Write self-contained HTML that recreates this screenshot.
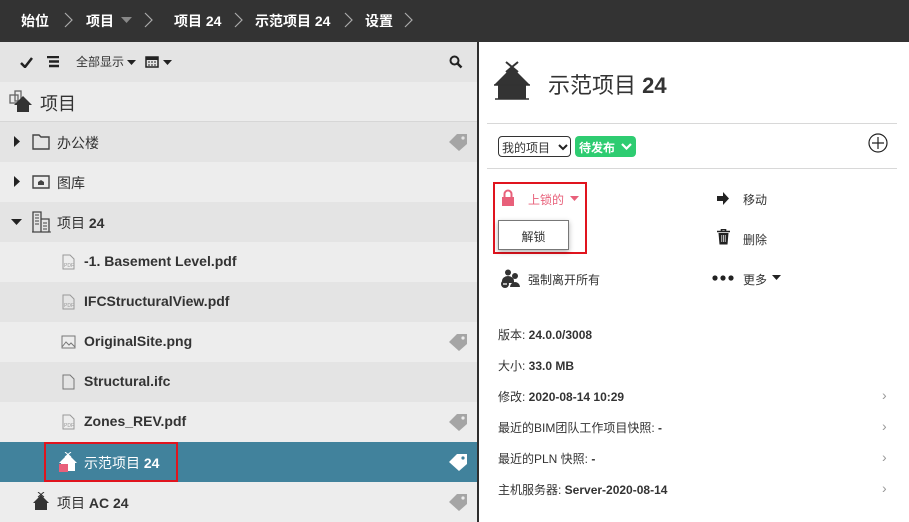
<!DOCTYPE html>
<html><head><meta charset="utf-8"><style>
*{margin:0;padding:0;box-sizing:border-box}
body{width:909px;height:522px;overflow:hidden;font-family:"Liberation Sans","Noto Sans CJK SC",sans-serif;background:#fff;position:relative;color:#333}
.top{position:absolute;left:0;top:0;width:909px;height:42px;background:#333;color:#fff;font-size:14px;font-weight:bold}
.top span{position:absolute;top:11px}
.top svg.sep{position:absolute;top:12px}
.left{position:absolute;left:0;top:42px;width:477px;height:480px;background:#ececec}
.vline{position:absolute;left:477px;top:42px;width:2px;height:480px;background:#2e2e2e}
.tool{position:absolute;left:0;top:0;width:477px;height:40px;background:#e4e4e4;font-size:13px}
.hdr{position:absolute;left:0;top:40px;width:477px;height:40px;background:#ececec;border-bottom:1px solid #d6d6d6;font-size:18px}
.row{position:absolute;left:0;width:477px;height:40px;font-size:14px}
.row .t{position:absolute;top:11px}
.d{background:#e4e4e4}.l{background:#ededed}
.b{font-weight:bold}
.tag{position:absolute;right:10px;top:12px}
.right{position:absolute;left:479px;top:42px;width:430px;height:480px;font-size:13px}
.info{position:absolute;left:19px;font-size:12px}
.chev{position:absolute;left:403px;color:#999;font-size:14px}
</style></head><body>
<div class="top">
<span style="left:21px">始位</span><svg class="sep" style="left:64px" width="9" height="16"><path d="M1 1l7 7-7 7" stroke="#aaa" stroke-width="1.2" fill="none"/></svg>
<span style="left:86px">项目</span><svg style="position:absolute;left:121px;top:17px" width="12" height="7"><path d="M0 0h11L5.5 6z" fill="#888"/></svg><svg class="sep" style="left:144px" width="9" height="16"><path d="M1 1l7 7-7 7" stroke="#aaa" stroke-width="1.2" fill="none"/></svg>
<span style="left:174px">项目 24</span><svg class="sep" style="left:234px" width="9" height="16"><path d="M1 1l7 7-7 7" stroke="#aaa" stroke-width="1.2" fill="none"/></svg>
<span style="left:255px">示范项目 24</span><svg class="sep" style="left:344px" width="9" height="16"><path d="M1 1l7 7-7 7" stroke="#aaa" stroke-width="1.2" fill="none"/></svg>
<span style="left:365px">设置</span><svg class="sep" style="left:404px" width="9" height="16"><path d="M1 1l7 7-7 7" stroke="#aaa" stroke-width="1.2" fill="none"/></svg>
</div>
<div class="left">
<div class="tool">
<svg style="position:absolute;left:20px;top:15px" width="13" height="11"><path d="M1 6l4 4 7-9" stroke="#222" stroke-width="2.5" fill="none"/></svg>
<svg style="position:absolute;left:47px;top:14px" width="14" height="12"><path d="M0 1h12M2 5.5h10M2 10h10" stroke="#222" stroke-width="2.5"/></svg>
<span style="position:absolute;left:76px;top:11px;font-size:12px">全部显示</span>
<svg style="position:absolute;left:127px;top:18px" width="10" height="6"><path d="M0 0h9L4.5 5z" fill="#222"/></svg>
<svg style="position:absolute;left:145px;top:13px" width="14" height="13"><rect x="1" y="2" width="12" height="10" fill="none" stroke="#222" stroke-width="1.5"/><rect x="1" y="2" width="12" height="3" fill="#222"/><path d="M3 7h2M6 7h2M9 7h2M3 10h2M6 10h2M9 10h2" stroke="#222"/></svg>
<svg style="position:absolute;left:163px;top:18px" width="10" height="6"><path d="M0 0h9L4.5 5z" fill="#222"/></svg>
<svg style="position:absolute;left:449px;top:13px" width="14" height="14"><circle cx="5.5" cy="5.5" r="4" stroke="#222" stroke-width="2" fill="none"/><path d="M8.5 8.5l4 4" stroke="#222" stroke-width="2.5"/></svg>
</div>
<div class="hdr">
<svg style="position:absolute;left:9px;top:7px" width="24" height="26"><rect x="6" y="2" width="6" height="10" fill="none" stroke="#666" stroke-width="1.3"/><rect x="1" y="6" width="8" height="8" fill="none" stroke="#666" stroke-width="1.3"/><path d="M14 7l9 9h-3v7h-12v-7h-3z" fill="#333"/></svg>
<span style="position:absolute;left:40px;top:8px">项目</span>
</div>
<div class="row d" style="top:80px">
<svg style="position:absolute;left:14px;top:14px" width="6" height="11"><path d="M0 0l6 5.5L0 11z" fill="#222"/></svg>
<svg style="position:absolute;left:32px;top:12px" width="18" height="16"><path d="M1 1h6l2 2h8v12H1z" fill="none" stroke="#444" stroke-width="1.4"/></svg>
<span class="t" style="left:57px">办公楼</span>
<svg class="tag" width="19" height="17"><path d="M9 0h10v10l-8 7-10-9z" fill="#a5a5a5"/><circle cx="15" cy="4" r="1.6" fill="#e4e4e4"/></svg>
</div>
<div class="row l" style="top:120px">
<svg style="position:absolute;left:14px;top:14px" width="6" height="11"><path d="M0 0l6 5.5L0 11z" fill="#222"/></svg>
<svg style="position:absolute;left:32px;top:12px" width="18" height="16"><path d="M1 2h16v12H1z" fill="none" stroke="#444" stroke-width="1.4"/><path d="M6 11h6v-3l-3-2-3 2z" fill="#444"/></svg>
<span class="t" style="left:57px">图库</span>
</div>
<div class="row d" style="top:160px">
<svg style="position:absolute;left:11px;top:17px" width="11" height="6"><path d="M0 0h11L5.5 6z" fill="#222"/></svg>
<svg style="position:absolute;left:32px;top:9px" width="19" height="22"><path d="M1 1h8v20H1zM9 8h8v13H9" fill="none" stroke="#444" stroke-width="1.3"/><path d="M3 4h4M3 7h4M3 10h4M3 13h4M11 12h4M11 15h4M11 18h4M0 21h19" stroke="#444"/></svg>
<span class="t" style="left:57px">项目 <b>24</b></span>
</div>
<div class="row l" style="top:200px">
<svg style="position:absolute;left:62px;top:12px" width="13" height="16"><path d="M1 1h7l4 4v10H1z" fill="none" stroke="#999"/><text x="2" y="13" font-size="5" fill="#999" font-family="Liberation Sans">PDF</text></svg>
<span class="t b" style="left:84px">-1. Basement Level.pdf</span>
</div>
<div class="row d" style="top:240px">
<svg style="position:absolute;left:62px;top:12px" width="13" height="16"><path d="M1 1h7l4 4v10H1z" fill="none" stroke="#999"/><text x="2" y="13" font-size="5" fill="#999" font-family="Liberation Sans">PDF</text></svg>
<span class="t b" style="left:84px">IFCStructuralView.pdf</span>
</div>
<div class="row l" style="top:280px">
<svg style="position:absolute;left:61px;top:13px" width="15" height="14"><rect x="1" y="1" width="13" height="12" fill="none" stroke="#777"/><path d="M1 12l4-5 3 3 2-2 4 4" fill="none" stroke="#777"/></svg>
<span class="t b" style="left:84px">OriginalSite.png</span>
<svg class="tag" width="19" height="17"><path d="M9 0h10v10l-8 7-10-9z" fill="#a5a5a5"/><circle cx="15" cy="4" r="1.6" fill="#ededed"/></svg>
</div>
<div class="row d" style="top:320px">
<svg style="position:absolute;left:62px;top:12px" width="13" height="16"><path d="M1 1h7l4 4v10H1z" fill="none" stroke="#777"/></svg>
<span class="t b" style="left:84px">Structural.ifc</span>
</div>
<div class="row l" style="top:360px">
<svg style="position:absolute;left:62px;top:12px" width="13" height="16"><path d="M1 1h7l4 4v10H1z" fill="none" stroke="#999"/><text x="2" y="13" font-size="5" fill="#999" font-family="Liberation Sans">PDF</text></svg>
<span class="t b" style="left:84px">Zones_REV.pdf</span>
<svg class="tag" width="19" height="17"><path d="M9 0h10v10l-8 7-10-9z" fill="#a5a5a5"/><circle cx="15" cy="4" r="1.6" fill="#ededed"/></svg>
</div>
<div class="row" style="top:400px;background:#41829c;color:#fff">
<div style="position:absolute;left:44px;top:0;width:134px;height:40px;border:2px solid #e0141e"></div>
<svg style="position:absolute;left:58px;top:10px" width="20" height="20"><path d="M10 2l9 9h-2v8H3v-8H1z" fill="#fff"/><path d="M7 0l6 5M13 0l-6 5" stroke="#fff"/><rect x="1" y="12" width="9" height="8" fill="#e8607a"/></svg>
<span class="t" style="left:84px">示范项目 <b>24</b></span>
<svg class="tag" width="19" height="17"><path d="M9 0h10v10l-8 7-10-9z" fill="#fff"/><circle cx="15" cy="4" r="1.6" fill="#41829c"/></svg>
</div>
<div class="row l" style="top:440px">
<svg style="position:absolute;left:32px;top:10px" width="18" height="19"><path d="M9 3l8 8h-2v7H3v-7H1z" fill="#333"/><path d="M6 0l6 5M12 0l-6 5" stroke="#333"/></svg>
<span class="t" style="left:57px">项目 <b>AC 24</b></span>
<svg class="tag" width="19" height="17"><path d="M9 0h10v10l-8 7-10-9z" fill="#a5a5a5"/><circle cx="15" cy="4" r="1.6" fill="#ededed"/></svg>
</div>
</div>
<div class="vline"></div>
<div class="right">
<svg style="position:absolute;left:13px;top:19px" width="40" height="40"><path d="M20 6l18 18h-4v14H6V24H2z" fill="#333"/><path d="M14 1l12 10M26 1L14 11" stroke="#333" stroke-width="2"/><path d="M2 24h36M3 38h34" stroke="#333" stroke-width="1.5"/></svg>
<span style="position:absolute;left:69px;top:26px;font-size:22px">示范项目 <b>24</b></span>
<div style="position:absolute;left:8px;top:81px;width:410px;height:1px;background:#d8d8d8"></div>
<div style="position:absolute;left:19px;top:94px;width:73px;height:21px;border:1px solid #333;border-radius:4px;font-size:12px;padding:2px 0 0 3px">我的项目<svg style="position:absolute;left:59px;top:7px" width="10" height="7"><path d="M1 1l4 4 4-4" stroke="#222" stroke-width="2" fill="none"/></svg></div>
<div style="position:absolute;left:96px;top:94px;width:61px;height:21px;background:#2ecc71;border-radius:4px;color:#fff;font-weight:bold;font-size:12px;padding:3px 0 0 4px">待发布<svg style="position:absolute;left:46px;top:7px" width="11" height="7"><path d="M1 1l4.5 4.5L10 1" stroke="#fff" stroke-width="2.2" fill="none"/></svg></div>
<svg style="position:absolute;left:389px;top:91px" width="20" height="20"><circle cx="10" cy="10" r="9" fill="none" stroke="#222" stroke-width="1.2"/><path d="M10 4v12M4 10h12" stroke="#222" stroke-width="1.2"/></svg>
<div style="position:absolute;left:8px;top:126px;width:410px;height:1px;background:#d8d8d8"></div>
<div style="position:absolute;left:14px;top:140px;width:94px;height:72px;border:2px solid #e0141e"></div>
<svg style="position:absolute;left:22px;top:147px" width="14" height="18"><path d="M3.5 8V5a3.5 3.5 0 017 0v3" fill="none" stroke="#e8607a" stroke-width="2"/><rect x="1" y="8" width="12" height="9" fill="#e8607a"/></svg>
<span style="position:absolute;left:49px;top:149px;color:#e8607a;font-size:12px">上锁的</span>
<svg style="position:absolute;left:91px;top:154px" width="10" height="6"><path d="M0 0h9L4.5 5z" fill="#e8607a"/></svg>
<div style="position:absolute;left:19px;top:178px;width:71px;height:30px;border:1px solid #777;background:#fff;box-shadow:0 2px 5px rgba(0,0,0,.3);font-size:12px;text-align:center;padding-top:7px">解锁</div>
<svg style="position:absolute;left:21px;top:227px" width="20" height="20"><circle cx="8" cy="3.5" r="3" fill="#333"/><circle cx="15" cy="7" r="3" fill="#333"/><path d="M2 12a6 5 0 0112 0v2H2zM10 18a5 5 0 0110 0z" fill="#333"/><circle cx="5" cy="15" r="4" fill="#333"/><path d="M3 15h4" stroke="#fff" stroke-width="1.3"/></svg>
<span style="position:absolute;left:49px;top:229px;font-size:12px">强制离开所有</span>
<svg style="position:absolute;left:238px;top:150px" width="12" height="13"><path d="M0 4h6V0l6 6.5-6 6.5V9H0z" fill="#222"/></svg>
<span style="position:absolute;left:264px;top:149px;font-size:12px">移动</span>
<svg style="position:absolute;left:238px;top:187px" width="13" height="16"><path d="M0 2.5h13M4.5 2.5V0.5h4v2" stroke="#222" stroke-width="1.6" fill="none"/><path d="M1.5 4h10l-1 11.5h-8z" fill="#222"/><path d="M4.8 6v7M6.5 6v7M8.2 6v7" stroke="#fff" stroke-width=".7"/></svg>
<span style="position:absolute;left:264px;top:189px;font-size:12px">删除</span>
<svg style="position:absolute;left:233px;top:233px" width="22" height="6"><circle cx="3" cy="3" r="2.6" fill="#222"/><circle cx="11" cy="3" r="2.6" fill="#222"/><circle cx="19" cy="3" r="2.6" fill="#222"/></svg>
<span style="position:absolute;left:264px;top:229px;font-size:12px">更多</span>
<svg style="position:absolute;left:293px;top:233px" width="10" height="6"><path d="M0 0h9L4.5 5z" fill="#222"/></svg>
<span class="info" style="top:284px">版本: <b>24.0.0/3008</b></span>
<span class="info" style="top:315px">大小: <b>33.0 MB</b></span>
<span class="info" style="top:346px">修改: <b>2020-08-14 10:29</b></span><span class="chev" style="top:345px">›</span>
<span class="info" style="top:377px">最近的BIM团队工作项目快照: <b>-</b></span><span class="chev" style="top:376px">›</span>
<span class="info" style="top:408px">最近的PLN 快照: <b>-</b></span><span class="chev" style="top:407px">›</span>
<span class="info" style="top:439px">主机服务器: <b>Server-2020-08-14</b></span><span class="chev" style="top:438px">›</span>
</div>
</body></html>
